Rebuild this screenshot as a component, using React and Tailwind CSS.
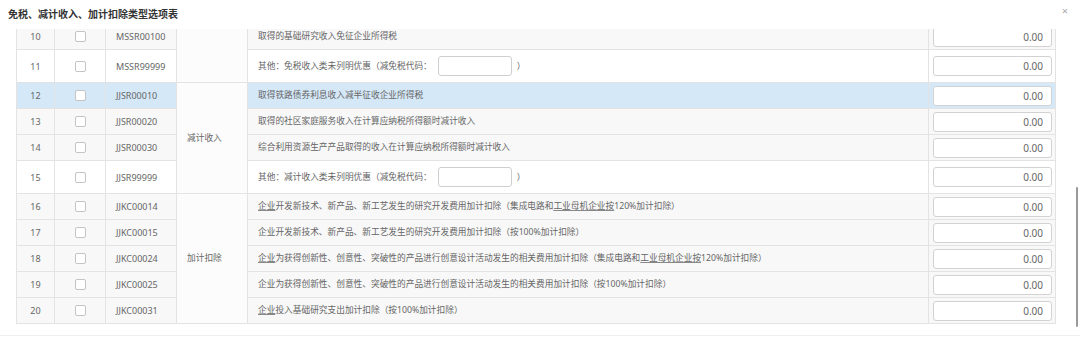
import React from 'react';

const rows = [
  { no: 10, code: 'MSSR00100', text: '取得的基础研究收入免征企业所得税' },
  { no: 11, code: 'MSSR99999', text: '其他：免税收入类未列明优惠（减免税代码：', input: true },
  { no: 12, code: 'JJSR00010', text: '取得铁路债券利息收入减半征收企业所得税', active: true },
  { no: 13, code: 'JJSR00020', text: '取得的社区家庭服务收入在计算应纳税所得额时减计收入' },
  { no: 14, code: 'JJSR00030', text: '综合利用资源生产产品取得的收入在计算应纳税所得额时减计收入' },
  { no: 15, code: 'JJSR99999', text: '其他：减计收入类未列明优惠（减免税代码：', input: true },
  { no: 16, code: 'JJKC00014', lead: '企业', text: '开发新技术、新产品、新工艺发生的研究开发费用加计扣除（集成电路和', mark: '工业母机企业按', tail: '120%加计扣除）' },
  { no: 17, code: 'JJKC00015', text: '企业开发新技术、新产品、新工艺发生的研究开发费用加计扣除（按100%加计扣除）' },
  { no: 18, code: 'JJKC00024', lead: '企业', text: '为获得创新性、创意性、突破性的产品进行创意设计活动发生的相关费用加计扣除（集成电路和', mark: '工业母机企业按', tail: '120%加计扣除）' },
  { no: 19, code: 'JJKC00025', text: '企业为获得创新性、创意性、突破性的产品进行创意设计活动发生的相关费用加计扣除（按100%加计扣除）' },
  { no: 20, code: 'JJKC00031', lead: '企业', text: '投入基础研究支出加计扣除（按100%加计扣除）' },
];

const groups = { 10: { span: 2, label: '' }, 12: { span: 4, label: '减计收入' }, 16: { span: 5, label: '加计扣除' } };

function Row({ r }) {
  const bg = r.active ? 'bg-[#d5e8f8]' : r.input ? 'bg-white' : 'bg-[#f8f8f8]';
  const cell = 'border border-[#e3e3e3] align-middle';
  const g = groups[r.no];
  return (
    <tr className={`${bg} ${r.input ? 'h-[33px]' : 'h-[26px]'}`}>
      <td className={`${cell} text-center text-[9px]`}>{r.no}</td>
      <td className={`${cell}`}>
        <div className="mx-auto w-[11px] h-[11px] border border-[#c4c4c4] rounded-[2px] bg-white" />
      </td>
      <td className={`${cell} pl-[10px] text-[9px]`}>{r.code}</td>
      {g && (
        <td rowSpan={g.span} className={`${cell} bg-[#fcfcfc] pl-[10px]`}>{g.label}</td>
      )}
      <td className={`${cell} pl-[10px]`}>
        {r.input ? (
          <div className="flex items-center">
            <span>{r.text}</span>
            <div className="ml-[6px] w-[74px] h-[20px] border border-[#cfcfcf] rounded-[3px] bg-white" />
            <span className="ml-[5px]">）</span>
          </div>
        ) : (
          <span>
            {r.lead && <span className="underline decoration-[#888]">{r.lead}</span>}
            {r.text}
            {r.mark && <span className="underline decoration-[#888]">{r.mark}</span>}
            {r.tail}
          </span>
        )}
      </td>
      <td className={`${cell} pl-[4px] pr-[3px]`}>
        <div className="h-[20px] border border-[#d2d2d2] rounded-[3px] bg-white flex items-center justify-end pr-[8px] text-[10px] text-[#666]">
          0.00
        </div>
      </td>
    </tr>
  );
}

export default function App() {
  return (
    <div
      className="w-[1080px] h-[344px] bg-white relative overflow-hidden text-[#666]"
      style={{ fontFamily: '"Noto Sans", "Noto Sans CJK SC", sans-serif' }}
    >
      <div className="h-[29px] flex items-center justify-between pl-[8px] pr-[12px]">
        <span className="text-[10px] font-bold text-[#333]">免税、减计收入、加计扣除类型选项表</span>
        <span className="text-[11px] text-[#aaa] -mt-[6px]">×</span>
      </div>

      <div className="h-[307px] overflow-hidden pl-[16px] pr-[25px] border-b border-[#eeeeee]">
        <table className="-mt-[6px] w-[1039px] table-fixed border-collapse text-[8.7px] leading-none">
          <colgroup>
            <col className="w-[38px]" />
            <col className="w-[51px]" />
            <col className="w-[71px]" />
            <col className="w-[71px]" />
            <col className="w-[681px]" />
            <col className="w-[127px]" />
          </colgroup>
          <tbody>
            {rows.map((r) => (
              <Row key={r.no} r={r} />
            ))}
          </tbody>
        </table>
      </div>

      <div className="absolute left-[1076px] top-[187px] w-[2px] h-[140px] bg-[#9a9a9a] rounded-full" />
    </div>
  );
}
